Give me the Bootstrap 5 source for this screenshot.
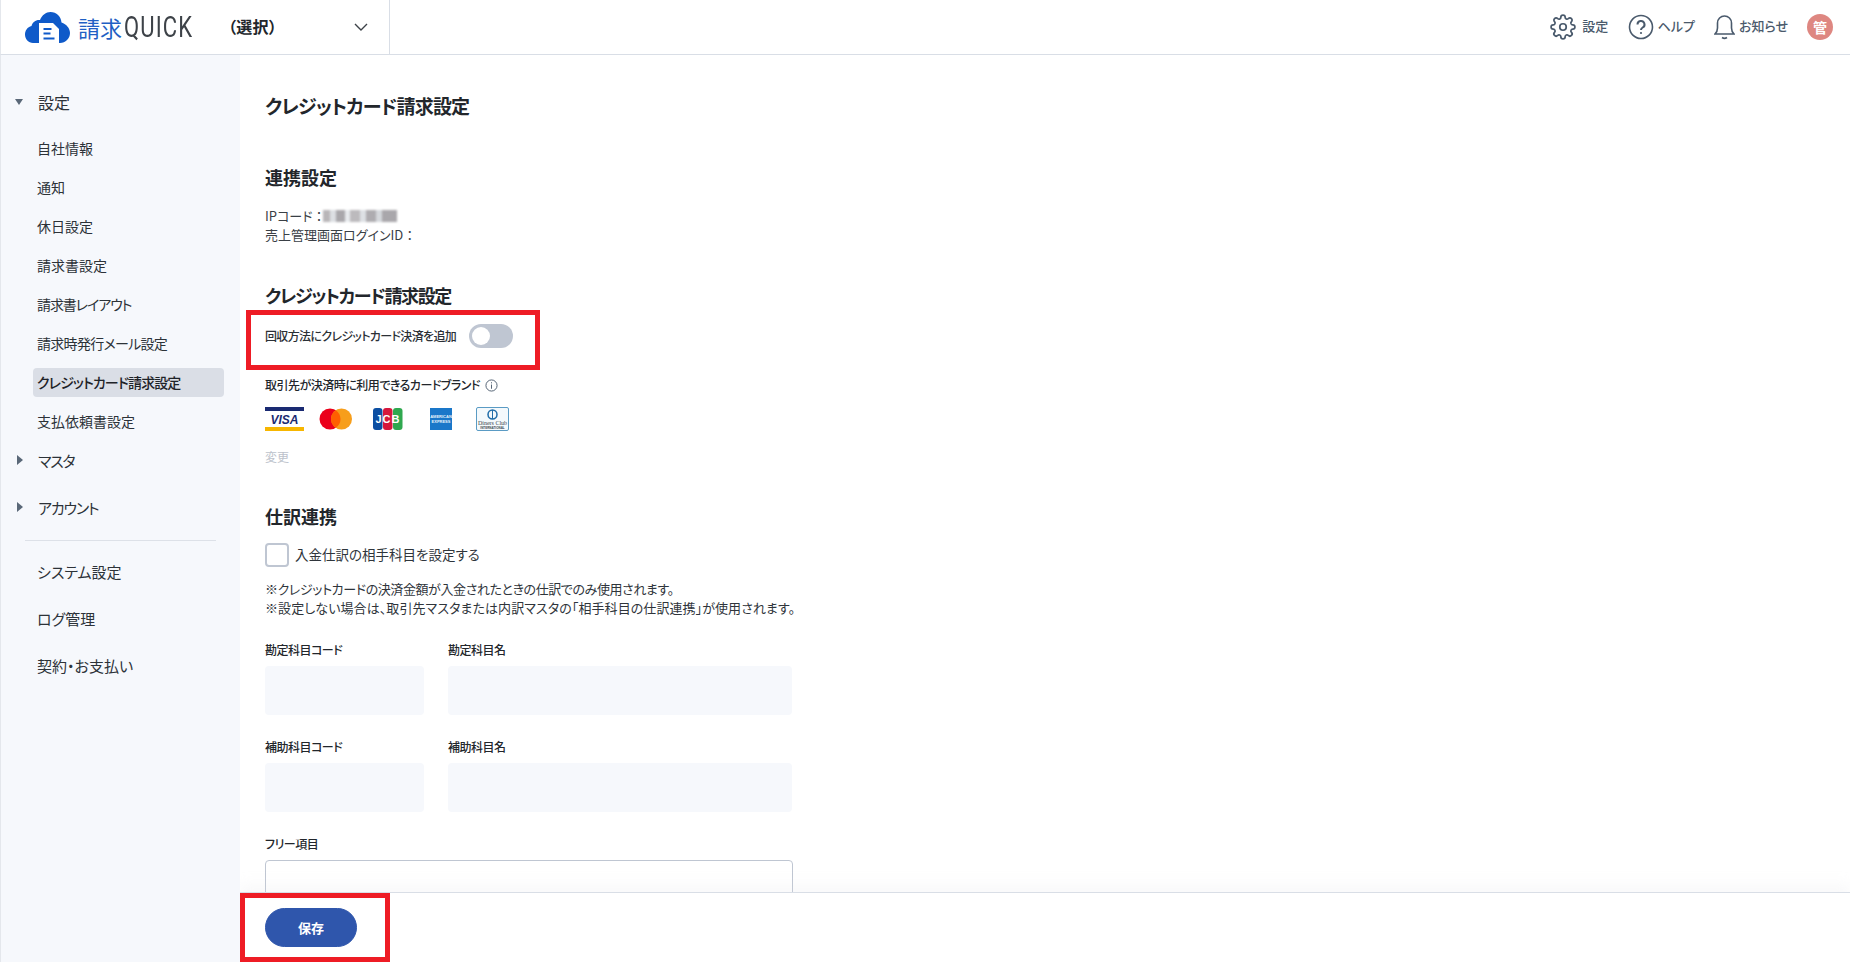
<!DOCTYPE html>
<html lang="ja">
<head>
  <meta charset="UTF-8">
  <title>請求QUICK</title>
  <link rel="stylesheet" href="https://cdn.jsdelivr.net/npm/bootstrap@5.3.0/dist/css/bootstrap.min.css">
  <style>
    html, body { height: 100%; overflow: hidden; }
    body { font-family: "Noto Sans CJK JP", "Liberation Sans", sans-serif; font-feature-settings: "palt"; color: #22262b; font-size: 14px; background: #fff; }
    .topbar { height: 55px; border-bottom: 1px solid #d9dee6; border-left: 1px solid #e4e7ec; }
    .brand-cell { width: 389px; height: 54px; border-right: 1px solid #d9dee6; padding-left: 24px; flex: none; }
    .brand-ja { font-size: 22px; color: #1f5fc4; margin-left: 8px; line-height: 1; white-space: nowrap; flex: none; font-feature-settings: normal; }
    .brand-en { font-family: "Roboto", sans-serif; font-size: 29px; color: #3d4248; letter-spacing: 1.5px; line-height: 1; font-weight: 400; display: block; width: 69px; margin-left: 2px; transform: scaleX(.76); transform-origin: left center; flex: none; }
    .tenant { font-size: 16px; font-weight: 700; margin-left: 35px; width: 126px; white-space: nowrap; flex: none; padding-bottom: 2px; letter-spacing: .3px; }
    .topnav-item { color: #4a5a6c; font-size: 13px; font-weight: 500; gap: 6px; }
    .topnav-item .nav-text { margin-top: -3px; }
    .gap-gear { margin-right: 19.5px; }
    .gap-help { margin-right: 19px; gap: 4px; }
    .gap-bell { margin-right: 19px; gap: 4px; }
    .avatar-dot { width: 26px; height: 26px; border-radius: 50%; background: #de8781; color: #fff; font-size: 14px; font-weight: 700; margin-right: 17px; }
    .side { width: 240px; height: calc(100vh - 55px); background: #f6f8fc; border-left: 1px solid #e4e7ec; padding-top: 25px; flex: none; }
    .side-group { height: 47px; padding-left: 37px; font-size: 15px; letter-spacing: -1.2px; color: #2c3238; position: relative; display: flex; align-items: center; }
    .side-group::before { content: ""; position: absolute; left: 14px; border-style: solid; }
    .side-group.open { margin-bottom: 7px; font-size: 16px; letter-spacing: 0; padding-bottom: 4px; }
    .side-group.open::before { border-width: 6px 4.5px 0 4.5px; border-color: #5a6878 transparent transparent transparent; top: 19px; }
    .side-group.shut::before { border-width: 5px 0 5px 6px; border-color: transparent transparent transparent #5a6878; top: 17px; left: 16px; }
    .side-sub { height: 29px; margin: 0 16px 10px 32px; padding-left: 4px; font-size: 14px; color: #2c3238; border-radius: 4px; display: flex; align-items: center; }
    .side-sub.on { background: #dadee6; font-weight: 500; color: #1f2328; letter-spacing: -.9px; }
    .side-sub.last { margin-bottom: 2px; }
    .tight-a { letter-spacing: -1.1px; }
    .tight-b { letter-spacing: -.7px; }
    .side-rule { border-top: 1px solid #dde1e8; margin: 8px 24px; }
    .side-tool { height: 47px; padding-left: 36px; font-size: 15px; color: #2c3238; display: flex; align-items: center; }
    .page-body { height: calc(100vh - 55px); overflow: hidden; position: relative; }
    .page-inner { padding: 37px 0 0 25px; width: 820px; }
    .page-title { font-size: 19px; font-weight: 700; margin: 0; line-height: 27px; letter-spacing: -.8px; }
    .sec-title { font-size: 18px; font-weight: 700; margin: 0; line-height: 24px; }
    .sec-link { margin-top: 46px; }
    .sec-card { margin-top: 39px; letter-spacing: -1.4px; }
    .sec-journal { margin-top: 38px; }
    .info-lines { line-height: 19px; font-size: 13px; color: #3a4046; margin-top: 17px; }
    .wide-colon { font-feature-settings: normal; }
    .blurred { display: inline-block; width: 74px; height: 12px; vertical-align: -1px; margin-left: -3px; background: linear-gradient(90deg, #b9b6b8 0 10%, #dcdfe3 10% 17%, #a9a7ab 17% 30%, #e8ebee 30% 36%, #bcbabd 36% 50%, #dde0e4 50% 58%, #aeacb0 58% 72%, #d5d8dc 72% 80%, #a9a7ab 80% 100%); filter: blur(1px); }
    .toggle-row { font-size: 12px; font-weight: 500; color: #2b3036; margin-top: 17px; letter-spacing: -.65px; }
    .toggle-track { width: 44px; height: 24px; border-radius: 12px; background: #bfc6d2; padding: 3px; display: block; margin-left: 13px; }
    .toggle-knob { width: 18px; height: 18px; border-radius: 50%; background: #fff; display: block; }
    .field-label { font-size: 12px; font-weight: 500; line-height: 18px; margin-bottom: 7px; letter-spacing: -.5px; }
    .brand-label { margin-top: 28px; margin-bottom: 13px; gap: 5px; }
    .brand-logos { gap: 13px; }
    .card-mark { width: 39px; height: 24px; display: block; flex: none; }
    .muted-link { color: #bcc2cb; font-size: 12px; line-height: 19px; margin-top: 16px; }
    .check-row { margin-top: 15px; }
    .check-box { width: 24px; height: 24px; border: 2px solid #bfc6d2; border-radius: 4px; background: #fff; display: block; margin-right: 6px; }
    .check-text { font-size: 13.5px; line-height: 19px; color: #2f353b; margin-top: -2px; }
    .note-lines { font-size: 13px; line-height: 19px; color: #2f353b; }
    .note-block { margin-top: 12px; }
    .note-first { letter-spacing: -.4px; }
    .note-second { letter-spacing: .08px; }
    .field-row { gap: 24px; margin-top: 23px; }
    .field-row.first-row { margin-top: 24px; }
    .fill-box { background: #f6f8fc; border-radius: 4px; height: 49px; }
    .fill-a { width: 159px; }
    .fill-b { width: 344px; }
    .free-wrap { margin-top: 23px; }
    .free-box { width: 528px; height: 60px; border: 1px solid #bfc6d2; border-radius: 4px; }
    .save-bar { position: absolute; left: 0; right: 0; bottom: 0; height: 70px; background: #fff; border-top: 1px solid #d9dee6; box-shadow: 0 -8px 12px rgba(220,224,230,.18); padding-left: 25px; }
    .save-btn { width: 92px; height: 39px; border-radius: 20px; background: #2f56ac; border-color: #2f56ac; color: #fff; font-size: 13px; font-weight: 700; padding: 0; }
    .red-frame { position: absolute; border: 5px solid #ee1c25; pointer-events: none; }
    .frame-a { left: 6px; top: 255px; width: 294px; height: 60px; }
    .frame-b { left: 0; top: 838px; width: 150px; height: 69px; }
  </style>
</head>
<body>
  <header class="topbar d-flex align-items-center">
    <div class="brand-cell d-flex align-items-center">
      <svg width="45" height="31" viewBox="0 0 45 31"><path d="M8 31C3.500 31 0 27 0 22.500c0-4 2.500-7.500 6.500-8.500C7.500 10 11 7.500 15 8 17 3 21 0 25.500 0c6 0 10.500 4.500 11 10.500 5 1.500 8.500 6 8.500 10.500 0 5.500-4.500 10-10 10z" fill="#0f5ac9"/><path d="M14 11h14l6 6v14H14z" fill="#fff"/><path d="M18.500 17h8M18.500 21.500h7M18.500 26.500h11" stroke="#0f5ac9" stroke-width="2.200"/></svg>
      <span class="brand-ja">請求</span><span class="brand-en">QUICK</span>
      <span class="tenant">（選択）</span>
      <svg width="14" height="8" viewBox="0 0 14 8"><path d="M1 1l6 6 6-6" fill="none" stroke="#3d4248" stroke-width="1.400"/></svg>
    </div>
    <div class="ms-auto d-flex align-items-center">
      <div class="topnav-item gap-gear d-flex align-items-center">
        <svg width="26" height="26" viewBox="0 0 24 24" fill="none" stroke="#4a5a6c" stroke-width="1.600"><circle cx="12" cy="12" r="3"/><path d="M19.400 15a1.700 1.700 0 0 0 .3 1.800l.1.100a2 2 0 1 1-2.900 2.900l-.1-.1a1.700 1.700 0 0 0-2.800 1.200V21a2 2 0 1 1-4 0v-.1A1.700 1.700 0 0 0 7.200 19.700l-.1.100a2 2 0 1 1-2.900-2.900l.1-.1a1.700 1.700 0 0 0-1.200-2.800H3a2 2 0 1 1 0-4h.1A1.700 1.700 0 0 0 4.300 7.200l-.1-.1a2 2 0 1 1 2.900-2.900l.1.100a1.700 1.700 0 0 0 1.800.3H9a1.700 1.700 0 0 0 1-1.500V3a2 2 0 1 1 4 0v.1a1.700 1.700 0 0 0 2.800 1.200l.1-.1a2 2 0 1 1 2.900 2.900l-.1.100a1.700 1.700 0 0 0-.3 1.800V9a1.700 1.700 0 0 0 1.500 1H21a2 2 0 1 1 0 4h-.1a1.700 1.700 0 0 0-1.500 1z"/></svg>
        <span class="nav-text">設定</span>
      </div>
      <div class="topnav-item gap-help d-flex align-items-center">
        <svg width="26" height="26" viewBox="0 0 26 26" fill="none" stroke="#4a5a6c" stroke-width="1.600"><circle cx="13" cy="13" r="11.500"/><path d="M9.500 10.500a3.500 3.500 0 1 1 5.200 3c-1.100.7-1.700 1.200-1.700 2.500" stroke-width="2"/><circle cx="13" cy="19" r="1.100" fill="#4a5a6c" stroke="none"/></svg>
        <span class="nav-text">ヘルプ</span>
      </div>
      <div class="topnav-item gap-bell d-flex align-items-center">
        <svg width="21" height="26" viewBox="0 0 21 26" fill="none" stroke="#4a5a6c" stroke-width="1.600"><path d="M1 20c2-2 2.500-3.500 2.500-6V9a7 7 0 0 1 14 0v5c0 2.500.5 4 2.500 6z"/><path d="M8 23.500c1.500 1 3.500 1 5 0"/></svg>
        <span class="nav-text">お知らせ</span>
      </div>
      <div class="avatar-dot d-flex align-items-center justify-content-center">管</div>
    </div>
  </header>
  <div class="d-flex">
    <nav class="side">
      <div class="side-group open">設定</div>
      <div class="side-sub">自社情報</div>
      <div class="side-sub">通知</div>
      <div class="side-sub">休日設定</div>
      <div class="side-sub">請求書設定</div>
      <div class="side-sub tight-a">請求書レイアウト</div>
      <div class="side-sub tight-b">請求時発行メール設定</div>
      <div class="side-sub on">クレジットカード請求設定</div>
      <div class="side-sub last">支払依頼書設定</div>
      <div class="side-group shut">マスタ</div>
      <div class="side-group shut">アカウント</div>
      <div class="side-rule"></div>
      <div class="side-tool">システム設定</div>
      <div class="side-tool">ログ管理</div>
      <div class="side-tool">契約・お支払い</div>
    </nav>
    <main class="page-body flex-grow-1">
      <div class="page-inner">
        <h1 class="page-title">クレジットカード請求設定</h1>
        <h2 class="sec-title sec-link">連携設定</h2>
        <div class="info-lines">
          <div>IPコード<span class="wide-colon">：</span><span class="blurred"></span></div>
          <div>売上管理画面ログインID<span class="wide-colon">：</span></div>
        </div>
        <h2 class="sec-title sec-card">クレジットカード請求設定</h2>
        <div class="toggle-row d-flex align-items-center"><span>回収方法にクレジットカード決済を追加</span><span class="toggle-track"><span class="toggle-knob"></span></span></div>
        <div class="field-label brand-label d-flex align-items-center">取引先が決済時に利用できるカードブランド
          <svg width="13" height="13" viewBox="0 0 14 14" fill="none" stroke="#4a5a6c"><circle cx="7" cy="7" r="6"/><path d="M7 6v4.500M7 3.500v1.200"/></svg>
        </div>
        <div class="brand-logos d-flex align-items-center">
          <svg class="card-mark" viewBox="0 0 39 24"><rect width="39" height="4" fill="#1a2a72"/><rect y="20" width="39" height="4" fill="#f7b600"/><text x="19.500" y="17" text-anchor="middle" font-family="Liberation Sans" font-size="12" font-weight="700" font-style="italic" fill="#1a2a72">VISA</text></svg>
          <svg class="card-mark" viewBox="0 0 39 24"><circle cx="13" cy="12" r="10.500" fill="#eb001b"/><circle cx="24.500" cy="12" r="10.500" fill="#f79e1b"/><path d="M18.750 3.200a10.500 10.500 0 0 1 0 17.600 10.500 10.500 0 0 1 0-17.600z" fill="#ff5f00"/></svg>
          <svg class="card-mark" viewBox="0 0 39 24"><rect x="4" y="1" width="9.500" height="22" rx="3" fill="#0b4ea2"/><rect x="14" y="1" width="9.500" height="22" rx="3" fill="#d6173c"/><rect x="24" y="1" width="9.500" height="22" rx="3" fill="#2fa84f"/><text x="19" y="16" text-anchor="middle" font-family="Liberation Sans" font-size="11" font-weight="700" letter-spacing="1" fill="#fff">JCB</text></svg>
          <svg class="card-mark" viewBox="0 0 39 24"><rect x="9" y="1" width="22" height="22" fill="#1a77c9"/><text x="20" y="11" text-anchor="middle" font-family="Liberation Sans" font-size="4" font-weight="700" fill="#e6f1fa">AMERICAN</text><text x="20" y="16" text-anchor="middle" font-family="Liberation Sans" font-size="4" font-weight="700" fill="#e6f1fa">EXPRESS</text></svg>
          <svg class="card-mark" viewBox="0 0 39 24"><rect x="3.500" y=".5" width="32" height="23" rx="1.500" fill="#f4f9fc" stroke="#5a9bc4"/><circle cx="19.500" cy="7.500" r="4.500" fill="none" stroke="#1f6ca8" stroke-width="1.500"/><path d="M19.500 3v9" stroke="#1f6ca8"/><text x="19.500" y="17.500" text-anchor="middle" font-family="Liberation Serif" font-size="6" fill="#3c4650">Diners Club</text><text x="19.500" y="21.500" text-anchor="middle" font-family="Liberation Sans" font-size="3" font-weight="700" fill="#3c4650">INTERNATIONAL</text></svg>
        </div>
        <div class="muted-link">変更</div>
        <h2 class="sec-title sec-journal">仕訳連携</h2>
        <div class="check-row d-flex align-items-center"><span class="check-box"></span><span class="check-text">入金仕訳の相手科目を設定する</span></div>
        <div class="note-lines note-block">
          <div class="note-first">※クレジットカードの決済金額が入金されたときの仕訳でのみ使用されます。</div>
          <div class="note-second">※設定しない場合は、取引先マスタまたは内訳マスタの「相手科目の仕訳連携」が使用されます。</div>
        </div>
        <div class="field-row first-row d-flex">
          <div><div class="field-label">勘定科目コード</div><div class="fill-box fill-a"></div></div>
          <div><div class="field-label">勘定科目名</div><div class="fill-box fill-b"></div></div>
        </div>
        <div class="field-row d-flex">
          <div><div class="field-label">補助科目コード</div><div class="fill-box fill-a"></div></div>
          <div><div class="field-label">補助科目名</div><div class="fill-box fill-b"></div></div>
        </div>
        <div class="free-wrap">
          <div class="field-label">フリー項目</div>
          <div class="free-box"></div>
        </div>
      </div>
      <div class="save-bar d-flex align-items-center">
        <button type="button" class="btn save-btn">保存</button>
      </div>
      <div class="red-frame frame-a"></div>
      <div class="red-frame frame-b"></div>
    </main>
  </div>
</body>
</html>
